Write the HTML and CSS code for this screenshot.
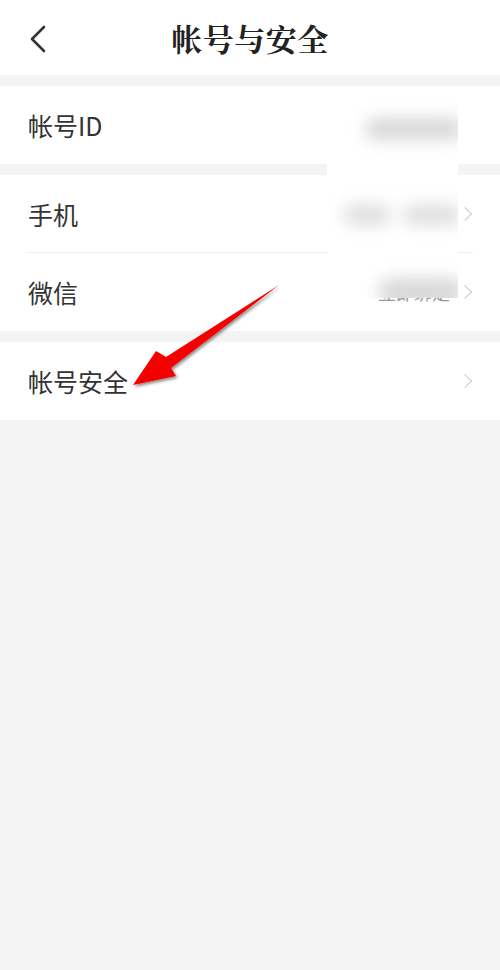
FILE: index.html
```html
<!DOCTYPE html>
<html lang="zh">
<head>
<meta charset="utf-8">
<link rel="stylesheet" href="styles.css">
</head>
<body>
<div class="page">
  <header class="topbar">
    <div class="back">
      <svg width="20" height="30" viewBox="0 0 20 30"><path d="M15 3 L3 15 L15 27" fill="none" stroke="#333" stroke-width="2.6" stroke-linecap="round" stroke-linejoin="round"/></svg>
    </div>
    <h1 class="title">帐号与安全</h1>
    <div></div>
  </header>

  <section class="group">
    <div class="row"><span class="label">帐号ID</span></div>
  </section>

  <section class="group">
    <div class="row divided"><span class="label">手机</span><span class="chev"></span></div>
    <div class="row"><span class="label">微信</span><span class="value">立即绑定</span><span class="chev"></span></div>
  </section>

  <section class="group">
    <div class="row"><span class="label">帐号安全</span><span class="chev"></span></div>
  </section>

  <div class="mask">
    <div class="blob b1"></div>
    <div class="blob b2"></div>
    <div class="blob b3"></div>
    <div class="blob b4"></div>
  </div>

  <svg class="arrow" width="500" height="970" viewBox="0 0 500 970">
    <defs>
      <filter id="sh" x="-20%" y="-20%" width="140%" height="140%">
        <feDropShadow dx="1.5" dy="2" stdDeviation="1.5" flood-color="#000" flood-opacity="0.45"/>
      </filter>
    </defs>
    <polygon points="279,285 166,357 156,351 133,385 176,376 171,368" fill="#f40000" filter="url(#sh)"/>
  </svg>
</div>
</body>
</html>
```

FILE: styles.css
```css
* { box-sizing: border-box; }
html, body { margin: 0; padding: 0; }
body {
  background: #f4f4f4;
  font-family: "Noto Sans CJK SC", "Noto Sans", sans-serif;
  color: #333;
}
.page { position: relative; width: 500px; min-height: 970px; }
.topbar {
  height: 75px;
  background: #fff;
  display: grid;
  grid-template-columns: 1fr auto 1fr;
  align-items: center;
}
.back { padding-left: 29px; display: flex; align-items: center; padding-top: 2px; }
.title {
  margin: 0;
  font-size: 31px;
  font-weight: 700;
  color: #222;
  letter-spacing: 0.5px;
  font-family: "Noto Serif CJK SC", "Noto Sans CJK SC", serif;
}
.group { background: #fff; margin-top: 11px; }
.row {
  height: 78px;
  display: flex;
  align-items: center;
  margin: 0 27px 0 28px;
  position: relative;
}
.row.divided { border-bottom: 1px solid #eeeeee; }
.label { font-size: 25px; color: #333; flex: 1; }
.value { font-size: 18px; color: #999; margin-right: 10px; }
.chev {
  width: 10px; height: 10px;
  border-top: 1.6px solid #c9c9c9;
  border-right: 1.6px solid #c9c9c9;
  transform: rotate(45deg);
  margin-right: 3px;
}
.mask {
  position: absolute;
  left: 327px; top: 100px;
  width: 131px; height: 198px;
  background: #fff;
  overflow: hidden;
}
.blob { position: absolute; background: #d8d8d8; border-radius: 12px; filter: blur(8px); }
.b1 { left: 38px; top: 18px; width: 98px; height: 22px; }
.b2 { left: 16px; top: 104px; width: 48px; height: 22px; background: #e0e0e0; }
.b3 { left: 76px; top: 104px; width: 58px; height: 22px; background: #e0e0e0; }
.b4 { left: 52px; top: 178px; width: 84px; height: 28px; background: #d8d8d8; }
.arrow { position: absolute; left: 0; top: 0; pointer-events: none; }
```
